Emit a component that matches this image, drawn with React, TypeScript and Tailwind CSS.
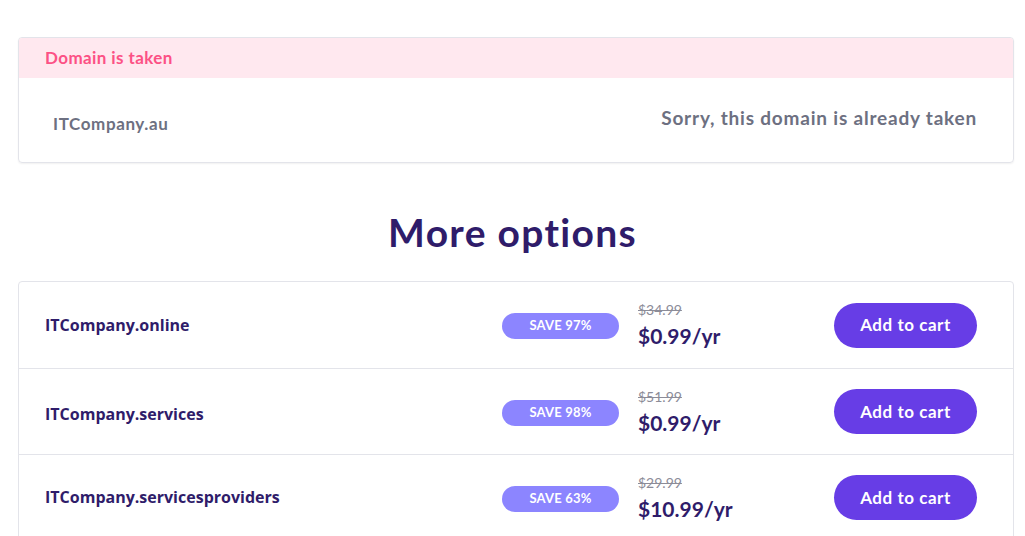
import React from "react";

const rows = [
  { name: "ITCompany.online", save: "SAVE 97%", old: "$34.99", price: "$0.99/yr", shift: "" },
  { name: "ITCompany.services", save: "SAVE 98%", old: "$51.99", price: "$0.99/yr", shift: "relative top-[2px]" },
  { name: "ITCompany.servicesproviders", save: "SAVE 63%", old: "$29.99", price: "$10.99/yr", shift: "relative -top-[1px]" },
];

export default function App() {
  return (
    <div className="w-[1025px] h-[536px] overflow-hidden bg-white px-[18px] pt-[37px]" style={{ fontFamily: "Lato, 'Open Sans', sans-serif" }}>
      <div className="w-[996px] rounded-[4px] border border-[#e3e4ea] shadow-[0_1px_2px_rgba(0,0,0,0.06)] overflow-hidden">
        <div className="h-[40px] bg-[#ffe8ef] flex items-center pl-[26px] text-[17px] tracking-[0.4px] font-bold text-[#fc5185]">
          Domain is taken
        </div>
        <div className="h-[84px] flex items-center justify-between pl-[34px] pr-[36px]">
          <span className="text-[17px] tracking-[0.6px] font-bold text-[#6d7081] mt-[8px]">ITCompany.au</span>
          <span className="text-[19px] tracking-[0.8px] font-bold text-[#6d7081] mb-[4px]">Sorry, this domain is already taken</span>
        </div>
      </div>
      <h2 className="mt-[45px] text-center text-[39px] tracking-[1.3px] leading-[48px] font-bold text-[#2f1c6a]">More options</h2>
      <div className="mt-[25px] w-[996px] rounded-t-[4px] border border-[#e3e4ea]">
        {rows.map((r, i) => (
          <div key={i} className={"h-[86px] flex items-center pl-[26px] pr-[36px] " + (i > 0 ? "border-t border-[#e3e4ea]" : "")}>
            <div className="flex-1 text-[16px] font-bold text-[#2f1c6a]" style={{ fontFamily: "'Open Sans', 'Noto Sans', sans-serif", fontWeight: 700 }}>
              <span className={r.shift}>{r.name}</span>
            </div>
            <div className="w-[117px] h-[26px] rounded-full bg-[#8c85ff] text-white text-[13px] tracking-[0.2px] font-bold flex items-center justify-center mr-[19px] mt-[2px]">
              {r.save}
            </div>
            <div className="w-[196px] flex flex-col gap-[2px] mt-[2px]">
              <span className="text-[14px] leading-[18px] text-[#8c8c98] line-through">{r.old}</span>
              <span className="text-[21px] leading-[30px] font-bold text-[#2f1c6a]">{r.price}</span>
            </div>
            <button className="w-[143px] h-[45px] rounded-full bg-[#673de6] text-white text-[17px] tracking-[0.55px] font-bold flex items-center justify-center">
              Add to cart
            </button>
          </div>
        ))}
      </div>
    </div>
  );
}
